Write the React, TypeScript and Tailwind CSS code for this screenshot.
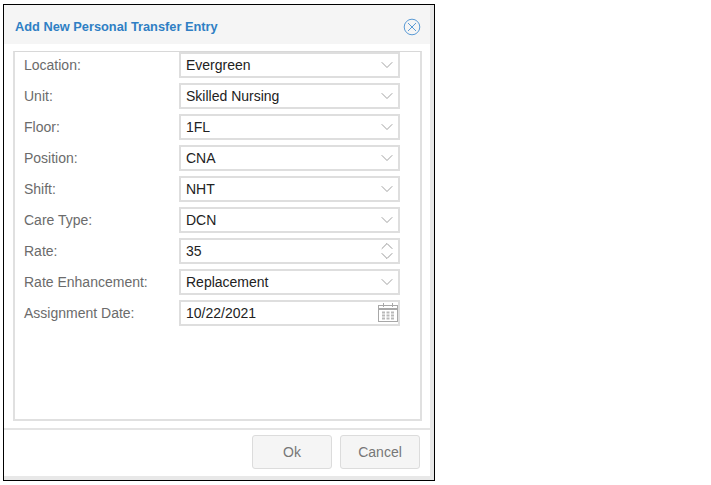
import { ChevronDown, ChevronUp } from "lucide-react";

const fields = [
  { label: "Location:", value: "Evergreen", kind: "select" },
  { label: "Unit:", value: "Skilled Nursing", kind: "select" },
  { label: "Floor:", value: "1FL", kind: "select" },
  { label: "Position:", value: "CNA", kind: "select" },
  { label: "Shift:", value: "NHT", kind: "select" },
  { label: "Care Type:", value: "DCN", kind: "select" },
  { label: "Rate:", value: "35", kind: "number" },
  { label: "Rate Enhancement:", value: "Replacement", kind: "select" },
  { label: "Assignment Date:", value: "10/22/2021", kind: "date" },
];

function CalendarIcon() {
  return (
    <svg width="22" height="20" viewBox="0 0 22 20" fill="none" stroke="#a8a8a8" strokeWidth="1">
      <rect x="1.5" y="2.5" width="19" height="16" />
      <path d="M1.5 6h19" strokeWidth="2" />
      <path d="M6.5 0v4M15.5 0v4" />
      <path d="M5 9.5h3M9.5 9.5h3M14 9.5h3M5 12.5h3M9.5 12.5h3M14 12.5h3M5 15.5h3M9.5 15.5h3M14 15.5h3" strokeWidth="2" stroke="#b8b8b8" />
    </svg>
  );
}

function Field({ value, kind }: { value: string; kind: string }) {
  return (
    <div className="flex h-[26px] w-[221px] items-center justify-between border-2 border-[#dedede] pl-[5px] text-[14px] text-[#222222]">
      <span>{value}</span>
      {kind === "select" && <ChevronDown size={20} strokeWidth={1} color="#8f8f8f" className="mr-[1px]" />}
      {kind === "number" && (
        <div className="mr-[1px] flex flex-col">
          <ChevronUp size={20} strokeWidth={1} color="#858585" className="-mb-[10px]" />
          <ChevronDown size={20} strokeWidth={1} color="#858585" />
        </div>
      )}
      {kind === "date" && (
        <div className="mr-[-1px]">
          <CalendarIcon />
        </div>
      )}
    </div>
  );
}

export default function App() {
  return (
    <div className="h-[485px] w-[711px] bg-white pl-[3px] pt-[4px] font-['Liberation_Sans',Arial,sans-serif]">
      <div className="h-[477px] w-[432px] border border-black bg-[#e8e8e8] pb-[4px] pr-[4px]">
        <div className="flex h-full flex-col bg-white">
          <div className="flex h-[39px] shrink-0 items-center justify-between bg-[#f5f5f5] pl-[11px] pr-[9px] pt-[4px]">
            <span className="text-[12.8px] font-bold text-[#2f7fc4]">Add New Personal Transfer Entry</span>
            <svg width="18" height="18" viewBox="0 0 18 18" fill="none" stroke="#5b9bd5" strokeWidth="1">
              <circle cx="9" cy="9" r="7.8" />
              <path d="M5 5l8 8M13 5l-8 8" />
            </svg>
          </div>
          <div className="ml-[9px] mt-[7px] flex h-[370px] w-[409px] flex-col gap-[5px] border-2 border-t border-[#e0e0e0] border-t-[#d8d8d8] pl-[9px]">
            {fields.map((f) => (
              <div key={f.label} className="flex items-center">
                <span className="w-[155px] text-[14px] text-[#6b6b6b]">{f.label}</span>
                <Field value={f.value} kind={f.kind} />
              </div>
            ))}
          </div>
          <div className="mt-[7px] h-[2px] shrink-0 bg-[#e4e4e4]" />
          <div className="flex justify-end gap-[8px] pr-[10px] pt-[5px]">
            <button className="h-[34px] w-[80px] rounded-[3px] border border-[#dcdcdc] bg-[#f5f5f5] text-[14px] text-[#777777]">Ok</button>
            <button className="h-[34px] w-[80px] rounded-[3px] border border-[#dcdcdc] bg-[#f5f5f5] text-[14px] text-[#777777]">Cancel</button>
          </div>
        </div>
      </div>
    </div>
  );
}
